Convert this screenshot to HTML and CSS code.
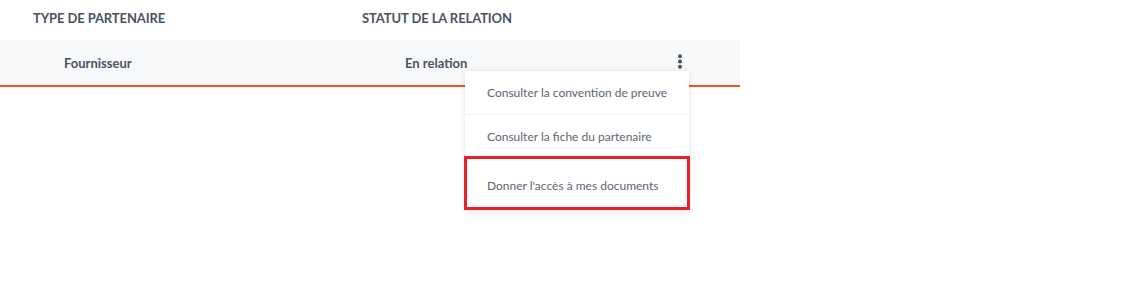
FILE: index.html
```html
<!DOCTYPE html>
<html lang="fr">
<head>
<meta charset="utf-8">
<link rel="stylesheet" href="styles.css">
</head>
<body>
<div class="table">
  <div class="head">
    <div class="hcell c1">Type de partenaire</div>
    <div class="hcell c2">Statut de la relation</div>
  </div>
  <div class="row">
    <div class="cell c1">Fournisseur</div>
    <div class="cell c2">En relation</div>
    <div class="actions">
      <button class="kebab" aria-label="Actions">
        <svg width="6" height="15" viewBox="0 0 6 15"><circle cx="3" cy="2.2" r="2" fill="#4b5361"/><circle cx="3" cy="7.5" r="2" fill="#4b5361"/><circle cx="3" cy="12.8" r="2" fill="#4b5361"/></svg>
      </button>
      <ul class="menu">
        <li class="item">Consulter la convention de preuve</li>
        <li class="item">Consulter la fiche du partenaire</li>
        <li class="item highlighted">Donner l'accès à mes documents</li>
      </ul>
    </div>
  </div>
</div>
</body>
</html>
```
FILE: styles.css
```css
* { box-sizing: border-box; }
html, body { margin: 0; padding: 0; background: #fff; }
body { font-family: Lato, "Open Sans", sans-serif; width: 1141px; height: 284px; overflow: hidden; }
.table { width: 740px; }
.head { display: grid; grid-template-columns: 329px 1fr; height: 40px; align-items: center; padding-left: 33px; padding-bottom: 4px; }
.hcell { font-size: 13px; font-weight: 700; color: #4b5361; text-transform: uppercase; letter-spacing: -0.1px; }
.row { position: relative; display: grid; grid-template-columns: 341px 1fr auto; height: 47px; align-items: center; padding-left: 64px; padding-right: 55px; background: #f7f8fa; border-bottom: 2px solid #f4511e; padding-top: 1px; }
.cell { font-size: 13px; font-weight: 700; color: #4b5361; }
.actions { display: flex; justify-content: center; }
.kebab { border: 0; background: none; padding: 0; width: 10px; height: 16px; display: flex; align-items: center; justify-content: center; margin-top: -4px; }
.menu { position: absolute; left: 465px; top: 31px; width: 224px; margin: 0; padding: 0; list-style: none; background: #fff; box-shadow: 0 1px 6px rgba(0,0,0,0.12); }
.item { font-size: 12px; color: #5d6572; height: 44px; display: flex; align-items: center; padding-left: 22px; border-bottom: 1px solid #eef0f2; }
.item.highlighted { height: 54px; border: 3px solid #e8202a; margin: -3px -1px 0 -1px; padding-left: 20px; padding-top: 4px; }
```
